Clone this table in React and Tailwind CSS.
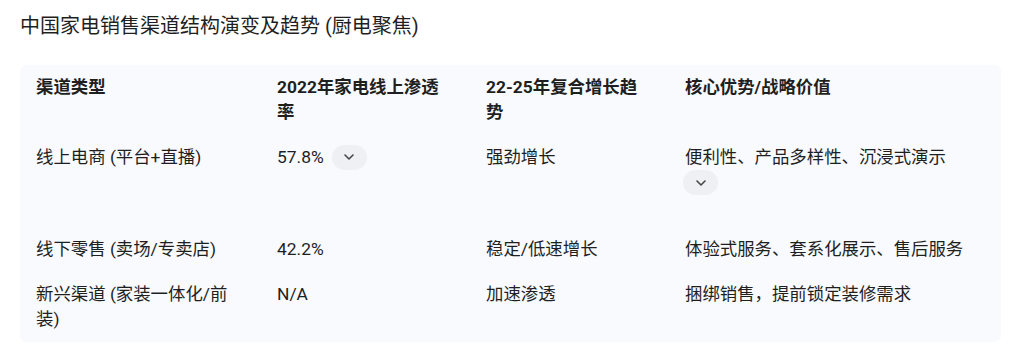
import React from "react";

const rows = [
  {
    channel: "线上电商 (平台+直播)",
    share: "57.8%",
    trend: "强劲增长",
    value: "便利性、产品多样性、沉浸式演示",
    expand: true,
  },
  {
    channel: "线下零售 (卖场/专卖店)",
    share: "42.2%",
    trend: "稳定/低速增长",
    value: "体验式服务、套系化展示、售后服务",
  },
  {
    channel: "新兴渠道 (家装一体化/前装)",
    share: "N/A",
    trend: "加速渗透",
    value: "捆绑销售，提前锁定装修需求",
  },
];

const Chevron = () => (
  <svg width="10" height="6" viewBox="0 0 10 6" fill="none">
    <path d="M1 1l4 4 4-4" stroke="#444746" strokeWidth="1.6" strokeLinecap="round" strokeLinejoin="round" />
  </svg>
);

const ExpandButton = ({ className = "" }) => (
  <button
    type="button"
    className={`inline-flex h-[25px] w-[35px] items-center justify-center rounded-full bg-[#eef0f4] align-middle ${className}`}
  >
    <Chevron />
  </button>
);

export default function App() {
  return (
    <div
      className="min-h-screen bg-white text-[#1f1f1f]"
      style={{ fontFamily: 'Roboto, "Noto Sans CJK SC", sans-serif' }}
    >
      {/* TITLE */}
      <div className="ml-5 mt-[12px] mb-[25px] text-[20px] leading-[28px]">
        中国家电销售渠道结构演变及趋势 (厨电聚焦)
      </div>

      {/* TABLE */}
      <div className="ml-5 w-[981px] rounded-md bg-[#f8fafd] text-[17.4px] leading-[25px]">
        <div className="grid grid-cols-[241px_209px_199px_332px] font-bold">
          <div className="px-4 py-[10px]">渠道类型</div>
          <div className="px-4 py-[10px]">2022年家电线上渗透率</div>
          <div className="px-4 py-[10px]">22-25年复合增长趋势</div>
          <div className="px-4 py-[10px]">核心优势/战略价值</div>
        </div>

        {rows.map((r) => (
          <div key={r.channel} className="grid grid-cols-[241px_209px_199px_332px]">
            <div className="px-4 py-[10px]">{r.channel}</div>
            <div className="px-4 py-[10px]">
              {r.share}
              {r.expand && <ExpandButton className="ml-[8px] -mt-[2px]" />}
            </div>
            <div className="px-4 py-[10px]">{r.trend}</div>
            <div className={`px-4 pt-[10px] ${r.expand ? "pb-[32px]" : "pb-[10px]"}`}>
              {r.value}
              {r.expand && (
                <div className="flex h-[25px] items-center">
                  <ExpandButton className="-ml-[2px]" />
                </div>
              )}
            </div>
          </div>
        ))}
      </div>
    </div>
  );
}
